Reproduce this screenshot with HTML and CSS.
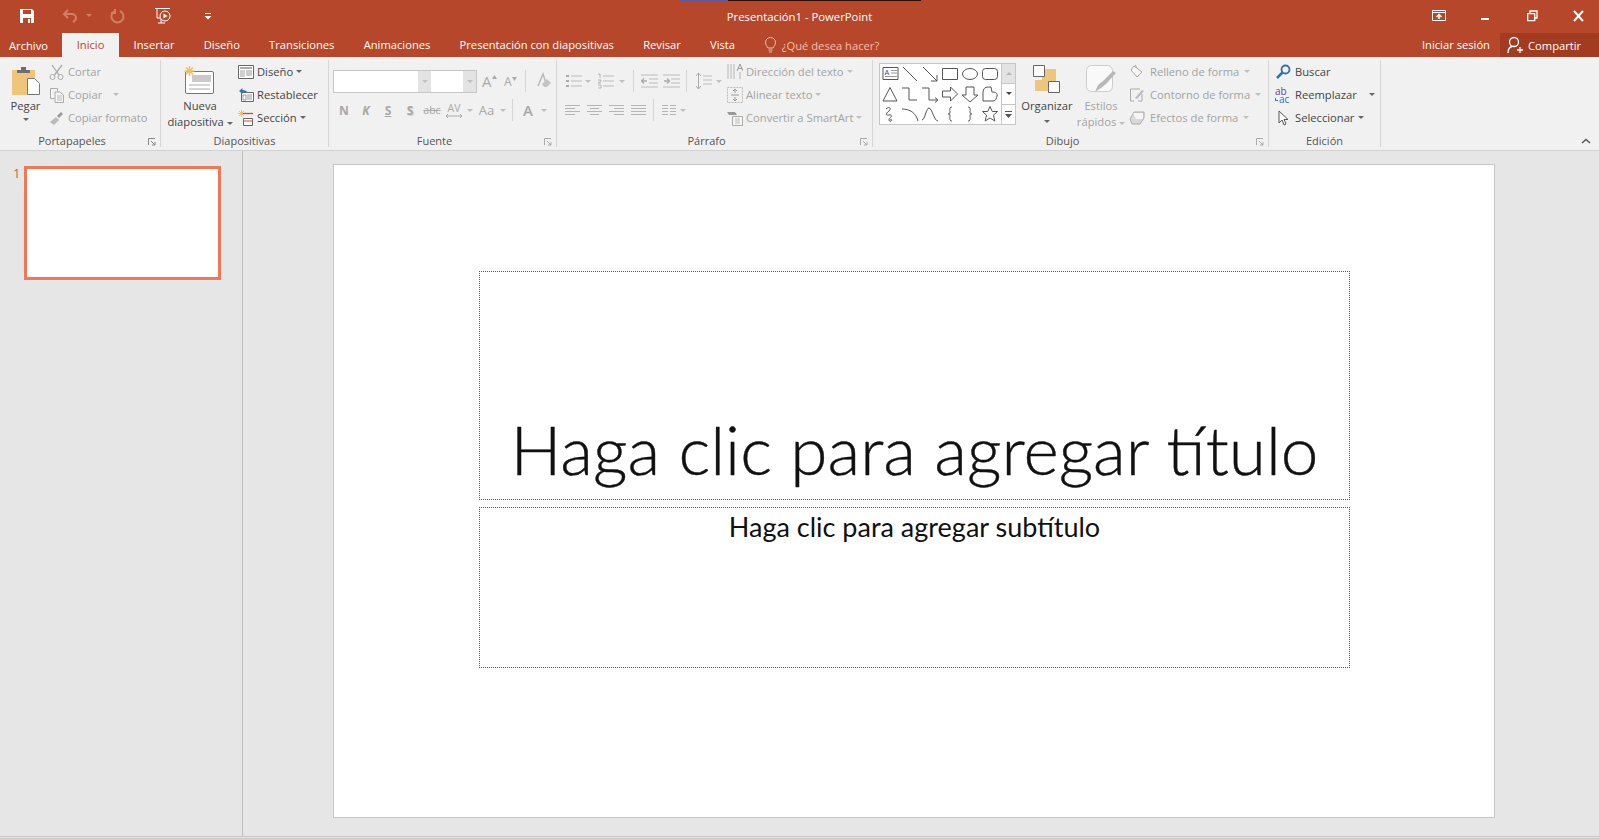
FILE: index.html
```html
<!DOCTYPE html>
<html>
<head>
  <title>Presentación1 - PowerPoint</title>
  <link rel="stylesheet" href="styles.css">
</head>
<body>
  <div class="glitch"><span class="glitch-a"></span><span class="glitch-b"></span></div>

  <!-- title bar -->
  <div class="titlebar">
    <div class="qat">
      <svg class="q-save" width="16" height="16" viewBox="0 0 16 16"><path d="M1 1h12l2 2v12H1z" fill="#fff"/><path d="M4 2h8v4H4zM4 10h8v5H4z" fill="#b7472a"/><path d="M9 11h2v4H9z" fill="#fff"/></svg>
      <svg class="q-undo" width="17" height="16" viewBox="0 0 17 16"><path d="M6 2L2 6l4 4M2 6h8a4 4 0 0 1 4 4c0 2-1 3-3 4" fill="none" stroke="#d17f63" stroke-width="2"/></svg>
      <span class="caret q-caret faded"></span>
      <svg class="q-redo" width="15" height="16" viewBox="0 0 15 16"><path d="M10 3a6 6 0 1 1-5 0M5 1v4H1" fill="none" stroke="#d17f63" stroke-width="2"/></svg>
      <svg class="q-show" width="18" height="18" viewBox="0 0 18 18"><path d="M1 1.500h15M3 2v9h3M4 16h7M7 12v4" fill="none" stroke="#fff"/><circle cx="11" cy="9" r="5" fill="none" stroke="#fff"/><path d="M9.500 6.500l4 2.500-4 2.500z" fill="#fff"/></svg>
      <svg class="q-more" width="8" height="8" viewBox="0 0 8 8"><path d="M1 1h6v1H1zM0.500 4h7L4 7.500z" fill="#fff"/></svg>
    </div>
    <div class="doc-title">Presentación1 - PowerPoint</div>
    <div class="winctl">
      <svg width="15" height="12" viewBox="0 0 15 12"><path d="M.5.500h13v10H.5zM1 2.500h12" fill="none" stroke="#fff"/><path d="M7 9V5M4.500 7L7 4.500 9.500 7" fill="none" stroke="#fff" stroke-width="1.500"/></svg>
      <svg class="w-min" width="10" height="12" viewBox="0 0 10 12"><path d="M1 9h8" stroke="#fff" stroke-width="2"/></svg>
      <svg class="w-restore" width="11" height="12" viewBox="0 0 11 12"><path d="M.7 3.700h7v7h-7zM3 3.500V1h7v7H8" fill="none" stroke="#fff" stroke-width="1.300"/></svg>
      <svg class="w-close" width="11" height="12" viewBox="0 0 11 12"><path d="M1 1l9 10M10 1L1 11" stroke="#fff" stroke-width="2"/></svg>
    </div>
  </div>

  <!-- tabs -->
  <div class="tabs">
    <a class="tab tab-file">Archivo</a>
    <a class="tab tab-active">Inicio</a>
    <a class="tab">Insertar</a>
    <a class="tab">Diseño</a>
    <a class="tab">Transiciones</a>
    <a class="tab">Animaciones</a>
    <a class="tab">Presentación con diapositivas</a>
    <a class="tab">Revisar</a>
    <a class="tab">Vista</a>
    <div class="tell">
      <svg width="13" height="17" viewBox="0 0 13 17"><path d="M4 11C3 9 1.500 8 1.500 5.500a5 5 0 0 1 10 0C11.500 8 10 9 9 11zM4.500 13h4M5 15h3" fill="none" stroke="#efc0ac"/></svg>
      <span>¿Qué desea hacer?</span>
    </div>
    <a class="signin">Iniciar sesión</a>
    <a class="share">
      <svg width="17" height="18" viewBox="0 0 17 18"><circle cx="7" cy="6" r="4.500" fill="none" stroke="#fff" stroke-width="1.300"/><path d="M1 17c0-4 2-6 4-6.500M10 14h6M13 11v6" fill="none" stroke="#fff" stroke-width="1.300"/></svg>
      Compartir
    </a>
  </div>

  <!-- ribbon -->
  <div class="ribbon">

    <div class="group g-clip">
      <div class="group-body">
        <div class="big b-paste">
          <svg width="28" height="30" viewBox="0 0 28 30"><path d="M0 5h23v25H0z" fill="#efc57c"/><path d="M5 5h13v3H5z" fill="#6e6e6e"/><path d="M9 2h5v3H9z" fill="#6e6e6e"/><path d="M15.500 13.500h7l5 5v11h-12z" fill="#fff" stroke="#777"/></svg>
          <span>Pegar</span>
          <span class="caret"></span>
        </div>
        <div class="col c-clip">
          <div class="row off">
            <svg width="16" height="16" viewBox="0 0 16 16"><circle cx="3.500" cy="13" r="2.500" fill="none" stroke="#aaa"/><circle cx="11.500" cy="13" r="2.500" fill="none" stroke="#aaa"/><path d="M3 1l7 10M13 1L5.500 11" stroke="#aaa" stroke-width="1.300"/></svg>
            Cortar
          </div>
          <div class="row off">
            <svg width="16" height="16" viewBox="0 0 16 16"><path d="M1.500 1.500h7v3M1.500 1.500v10h4M6 5h5l3.500 3v7.500H6z" fill="#f6f6f6" stroke="#aaa"/><path d="M8 9h5M8 11h5M8 13h5" stroke="#bbb"/></svg>
            Copiar <span class="caret gap"></span>
          </div>
          <div class="row off">
            <svg width="16" height="16" viewBox="0 0 16 16"><path d="M1 12l6-5 3 3-5 5z" fill="#bbb"/><path d="M8 6l4-4 2 2-4 4z" fill="#999"/></svg>
            Copiar formato
          </div>
        </div>
      </div>
      <div class="group-label">Portapapeles</div>
      <svg class="launcher" width="8" height="8" viewBox="0 0 8 8"><path d="M.5 7V.5H7M3 3l4 4M7 4v3H4" fill="none" stroke="#888"/></svg>
    </div>

    <div class="group g-slides">
      <div class="group-body">
        <div class="big b-new">
          <svg class="i-new" width="31" height="30" viewBox="0 0 31 30"><rect x="2.500" y="6.500" width="28" height="22" rx="1.500" fill="#fff" stroke="#777"/><path d="M9 10h19v7H9z" fill="#c9c9c9"/><path d="M6 20h21M6 24h21" stroke="#aaa"/><path d="M6.500 1v10M1.500 6h10M3 2.500l7 7M10 2.500l-7 7" stroke="#efc064" stroke-width="1.500"/></svg>
          <span>Nueva</span>
          <span>diapositiva <i class="caret"></i></span>
        </div>
        <div class="col c-slides">
          <div class="row">
            <svg width="16" height="16" viewBox="0 0 16 16"><path d="M.5 1.500h15v13H.5z" fill="#fff" stroke="#666"/><path d="M2 3h12v2H2z" fill="#aaa"/><path d="M2 6h5v7H2z" fill="#cfcfcf"/><path d="M8 7h6M8 9h6M8 11h6" stroke="#999"/></svg>
            Diseño <i class="caret"></i>
          </div>
          <div class="row">
            <svg width="16" height="16" viewBox="0 0 16 16"><path d="M3.500 5.500h12v9h-12z" fill="#fff" stroke="#666"/><path d="M9 8h5M9 10h5M9 12h5M5 8h3v5H5z" fill="none" stroke="#999"/><path d="M1 4l3.500-3v2c3 0 4.500 1 5 3-1.500-1-3-1-5-1v2z" fill="#2f76c0"/></svg>
            Restablecer
          </div>
          <div class="row">
            <svg width="16" height="16" viewBox="0 0 16 16"><path d="M3.500 0v7M0 3.500h7M1 1l5 5M6 1L1 6" stroke="#efc064"/><path d="M5 3.500h10" stroke="#d0492a" stroke-width="1.300"/><path d="M5.500 8.500h9v7h-9z" fill="#fff" stroke="#666"/><path d="M5 11h10" stroke="#d0492a"/></svg>
            Sección <i class="caret"></i>
          </div>
        </div>
      </div>
      <div class="group-label">Diapositivas</div>
    </div>

    <div class="group g-font">
      <div class="group-body body-col">
        <div class="tools t-font1">
          <div class="combo c-name"><span class="combo-field"></span><span class="combo-arrow"><i class="caret light"></i></span></div>
          <div class="combo c-size"><span class="combo-field"></span><span class="combo-arrow"><i class="caret light"></i></span></div>
          <span class="txt-tool big-a">A<svg width="5" height="4" viewBox="0 0 5 4"><path d="M0 4l2.500-4L5 4z" fill="#aaa"/></svg></span>
          <span class="txt-tool small-a">A<svg width="5" height="4" viewBox="0 0 5 4"><path d="M0 0l2.500 4L5 0z" fill="#aaa"/></svg></span>
          <span class="vsep"></span>
          <svg class="clear-ico" width="18" height="18" viewBox="0 0 18 18"><path d="M4 14L9 2l4 12" fill="none" stroke="#bbb" stroke-width="1.500"/><path d="M8 12l5-5 4 4-4 4H10z" fill="#c4c4c4"/></svg>
        </div>
        <div class="tools t-font2">
          <span class="tool strong">N</span>
          <span class="tool strong slant">K</span>
          <span class="tool strong under">S</span>
          <span class="tool strong shadow">S</span>
          <span class="tool strike">abc</span>
          <span class="tool av">AV<svg width="16" height="4" viewBox="0 0 16 4"><path d="M0 2h16M2 0L0 2l2 2M14 0l2 2-2 2" fill="none" stroke="#aaa"/></svg></span>
          <i class="caret narrow"></i>
          <span class="tool wide aa">Aa</span>
          <i class="caret narrow"></i>
          <span class="vsep sep-a"></span>
          <span class="tool color-a">A</span>
          <i class="caret narrow"></i>
        </div>
      </div>
      <div class="group-label">Fuente</div>
      <svg class="launcher" width="8" height="8" viewBox="0 0 8 8"><path d="M.5 7V.5H7M3 3l4 4M7 4v3H4" fill="none" stroke="#aaa"/></svg>
    </div>

    <div class="group g-para">
      <div class="group-body">
        <div class="body-col para-left">
          <div class="tools t-para1">
            <svg width="17" height="16" viewBox="0 0 17 16"><path d="M6 3h11M6 8h11M6 13h11" stroke="#bbb"/><path d="M1 2h3v2H1zM1 7h3v2H1zM1 12h3v2H1z" fill="#aaa"/></svg>
            <i class="caret narrow cb1"></i>
            <svg width="17" height="16" viewBox="0 0 17 16"><path d="M6 3h11M6 8h11M6 13h11" stroke="#bbb"/><path d="M1 1h2v4M1 7h3v1L1 10h3M1 12h3v3H1" fill="none" stroke="#aaa" stroke-width=".8"/></svg>
            <i class="caret narrow cb2"></i>
            <span class="vsep v1"></span>
            <svg width="17" height="16" viewBox="0 0 17 16"><path d="M0 2h17M8 6h9M8 10h9M0 14h17" stroke="#bbb"/><path d="M6 8l-5 0M3 5.500L.5 8 3 10.500" fill="none" stroke="#aaa" stroke-width="1.300"/></svg>
            <svg class="i-ind" width="17" height="16" viewBox="0 0 17 16"><path d="M0 2h17M8 6h9M8 10h9M0 14h17" stroke="#bbb"/><path d="M1 8h5M4 5.500L6.500 8 4 10.500" fill="none" stroke="#aaa" stroke-width="1.300"/></svg>
            <span class="vsep v2"></span>
            <svg class="i-line" width="17" height="18" viewBox="0 0 17 18"><path d="M3.500 1v16M1 4l2.500-3L6 4M1 14l2.500 3L6 14" fill="none" stroke="#aaa"/><path d="M8 4h9M8 8h9M8 12h9" stroke="#bbb"/></svg>
            <i class="caret narrow cb3"></i>
          </div>
          <div class="tools t-para2">
            <svg class="al" width="15" height="12" viewBox="0 0 15 12"><path d="M0 1.500h15M0 4.500h10M0 7.500h15M0 10.500h10" stroke="#b5b5b5"/></svg>
            <svg class="al" width="15" height="12" viewBox="0 0 15 12"><path d="M0 1.500h15M3 4.500h9M0 7.500h15M3 10.500h9" stroke="#b5b5b5"/></svg>
            <svg class="al" width="15" height="12" viewBox="0 0 15 12"><path d="M0 1.500h15M5 4.500h10M0 7.500h15M5 10.500h10" stroke="#b5b5b5"/></svg>
            <svg class="al" width="15" height="12" viewBox="0 0 15 12"><path d="M0 1.500h15M0 4.500h15M0 7.500h15M0 10.500h15" stroke="#b5b5b5"/></svg>
            <span class="vsep v3"></span>
            <svg width="14" height="12" viewBox="0 0 14 12"><path d="M0 1.500h6M8 1.500h6M0 4.500h6M8 4.500h6M0 7.500h6M8 7.500h6M0 10.500h6M8 10.500h6" stroke="#b5b5b5"/></svg>
            <i class="caret narrow cb3"></i>
          </div>
        </div>
        <div class="col c-para">
          <div class="row off">
            <svg width="16" height="18" viewBox="0 0 16 18"><path d="M1 1v15M4 1v15M7 1v15" stroke="#b5b5b5"/><path d="M10 8l3-7 3 7M11 5.500h4" fill="none" stroke="#999"/><path d="M13 9v7" stroke="#b5b5b5"/></svg>
            Dirección del texto <i class="caret light"></i>
          </div>
          <div class="row off">
            <svg width="16" height="16" viewBox="0 0 16 16"><path d="M.5.500h15v15H.5z" fill="none" stroke="#bbb" stroke-dasharray="2 1"/><path d="M8 2v4M6 4l2-2 2 2M8 14v-4M6 12l2 2 2-2M4 8h8" fill="none" stroke="#999"/></svg>
            Alinear texto <i class="caret light"></i>
          </div>
          <div class="row off">
            <svg width="16" height="16" viewBox="0 0 16 16"><path d="M0 2h8l2 3H2z" fill="#999"/><path d="M5.500 6.500h10v9h-10z" fill="#f6f6f6" stroke="#aaa"/><path d="M8 9h5M8 11h5M8 13h5" stroke="#bbb"/></svg>
            Convertir a SmartArt <i class="caret light"></i>
          </div>
        </div>
      </div>
      <div class="group-label">Párrafo</div>
      <svg class="launcher" width="8" height="8" viewBox="0 0 8 8"><path d="M.5 7V.5H7M3 3l4 4M7 4v3H4" fill="none" stroke="#aaa"/></svg>
    </div>

    <div class="group g-draw">
      <div class="group-body">
        <div class="gallery">
          <div class="shapes">
            <svg viewBox="0 0 20 20"><path d="M3 3.500h15v12H3z" fill="#fff" stroke="#555"/><path d="M11 6.500h6M11 9h6M5 12.500h12" stroke="#999"/><text x="4.500" y="10.500" class="s-a">A</text></svg>
            <svg viewBox="0 0 20 20"><path d="M3 3l14 14" class="sh"/></svg>
            <svg viewBox="0 0 20 20"><path d="M3 3l14 14M17 11v6h-6" class="sh"/></svg>
            <svg viewBox="0 0 20 20"><path d="M2.500 4.500h15v11h-15z" class="sh"/></svg>
            <svg viewBox="0 0 20 20"><ellipse cx="10" cy="10" rx="7.500" ry="5.500" class="sh"/></svg>
            <svg viewBox="0 0 20 20"><rect x="2.500" y="4.500" width="15" height="11" rx="3" class="sh"/></svg>
            <svg viewBox="0 0 20 20"><path d="M10 3.500L17 17H3z" class="sh"/></svg>
            <svg viewBox="0 0 20 20"><path d="M2 4h7v12h8" class="sh"/></svg>
            <svg viewBox="0 0 20 20"><path d="M2 4h7v12h8M15 13.500l3 2.500-3 2.500" class="sh"/></svg>
            <svg viewBox="0 0 20 20"><path d="M2.500 7h8V3l7 7-7 7v-4h-8z" class="sh"/></svg>
            <svg viewBox="0 0 20 20"><path d="M6 3h8v8h4l-8 7-8-7h4z" class="sh"/></svg>
            <svg viewBox="0 0 20 20"><path d="M3 17V8c0-3 2-5 5-5h3l1 5c3 0 6 1 5 4-.5 2-1 5-4 5z" class="sh"/></svg>
            <svg viewBox="0 0 20 20"><path d="M6 5c3-3 6-1 3 2-3 2-4 5 0 4 3-1 3 2 1 3-2 1-1 4 1 3 2-1 0-2-1-1" class="sh"/></svg>
            <svg viewBox="0 0 20 20"><path d="M2 5c8 0 14 4 16 12" class="sh"/></svg>
            <svg viewBox="0 0 20 20"><path d="M2 16C5 16 6 4 9 4s5 13 9 13" class="sh"/></svg>
            <svg viewBox="0 0 20 20"><path d="M12 3c-3 0-2 3-2 5s-1 2-2 2c1 0 2 0 2 2s-1 5 2 5" class="sh"/></svg>
            <svg viewBox="0 0 20 20"><path d="M8 3c3 0 2 3 2 5s1 2 2 2c-1 0-2 0-2 2s1 5-2 5" class="sh"/></svg>
            <svg viewBox="0 0 20 20"><path d="M10 2.500l2.300 5h5.200l-4 3.700 1.300 5.800-4.800-3-4.800 3 1.300-5.800-4-3.700h5.200z" class="sh"/></svg>
          </div>
          <div class="gal-scroll">
            <span class="gal-btn gal-up"><i class="caret up light"></i></span>
            <span class="gal-btn"><i class="caret dark"></i></span>
            <span class="gal-btn gal-more"><svg width="7" height="8" viewBox="0 0 7 8"><path d="M0 1h7v1H0zM0 4h7L3.500 8z" fill="#555"/></svg></span>
          </div>
        </div>
        <div class="big b-arrange">
          <svg width="28" height="28" viewBox="0 0 28 28"><path d="M9 4h14v12H9zM2 15h14v11H2z" fill="#efc57c"/><path d="M.5.500h11v11H.5z" fill="#fff" stroke="#666"/><path d="M15.500 16.500h11v11h-11z" fill="#fff" stroke="#666"/></svg>
          <span>Organizar</span>
          <span class="caret"></span>
        </div>
        <div class="big b-styles off">
          <svg width="30" height="28" viewBox="0 0 30 28"><rect x=".5" y=".5" width="26" height="26" rx="5" fill="#f9f9f9" stroke="#ccc"/><path d="M30 8L20 19l-5 4-6 4 3-7 5-4 10-10z" fill="#b8b8b8"/></svg>
          <span>Estilos</span>
          <span>rápidos <i class="caret light"></i></span>
        </div>
        <div class="col c-draw">
          <div class="row off">
            <svg width="16" height="16" viewBox="0 0 16 16"><path d="M5 2l8 6-5 5-6-7z" fill="#f6f6f6" stroke="#aaa"/><path d="M6 1l2 3" stroke="#aaa"/></svg>
            Relleno de forma <i class="caret light"></i>
          </div>
          <div class="row off">
            <svg width="16" height="16" viewBox="0 0 16 16"><path d="M11 2H1.500v12H5M13 7v7H9" fill="none" stroke="#aaa"/><path d="M6 11l7-8 2 1-7 8z" fill="#bbb"/></svg>
            Contorno de forma <i class="caret light"></i>
          </div>
          <div class="row off">
            <svg width="16" height="16" viewBox="0 0 16 16"><path d="M1 9l4-7h10v6l-4 6H3z" fill="#d9d9d9" stroke="#aaa"/><path d="M4 3h10v6H7z" fill="#f6f6f6"/></svg>
            Efectos de forma <i class="caret light"></i>
          </div>
        </div>
      </div>
      <div class="group-label">Dibujo</div>
      <svg class="launcher" width="8" height="8" viewBox="0 0 8 8"><path d="M.5 7V.5H7M3 3l4 4M7 4v3H4" fill="none" stroke="#aaa"/></svg>
    </div>

    <div class="group g-edit">
      <div class="group-body">
        <div class="col c-edit">
          <div class="row">
            <svg width="16" height="16" viewBox="0 0 16 16"><circle cx="10.500" cy="5.500" r="4" fill="none" stroke="#2f6fb5" stroke-width="1.800"/><path d="M7.500 8.500L2 14" stroke="#2f6fb5" stroke-width="2.500"/></svg>
            Buscar
          </div>
          <div class="row">
            <svg width="16" height="16" viewBox="0 0 16 16"><text x="0" y="8" class="rp-a">ab</text><text x="4" y="15.500" class="rp-b">ac</text><path d="M.5 11v2.500H3" fill="none" stroke="#2f6fb5"/></svg>
            Reemplazar <i class="caret gap"></i>
          </div>
          <div class="row">
            <svg width="16" height="16" viewBox="0 0 16 16"><path d="M4 1v12l3-3 2 5 2-1-2-4.500h4z" fill="#fff" stroke="#555"/></svg>
            Seleccionar <i class="caret"></i>
          </div>
        </div>
      </div>
      <div class="group-label">Edición</div>
    </div>

    <svg class="collapse" width="10" height="6" viewBox="0 0 10 6"><path d="M1 5l4-3.500L9 5" fill="none" stroke="#555" stroke-width="1.500"/></svg>
  </div>

  <!-- workspace -->
  <div class="workspace">
    <div class="thumbs">
      <span class="thumb-num">1</span>
      <div class="thumb"></div>
    </div>
    <div class="editor">
      <div class="slide">
        <div class="ph ph-title">Haga clic para agregar título</div>
        <div class="ph ph-sub">Haga clic para agregar subtítulo</div>
      </div>
    </div>
  </div>
  <div class="bottom-line"></div>
</body>
</html>
```

FILE: styles.css
```css
* {
  box-sizing: border-box;
}

html, body {
  margin: 0;
  height: 100%;
  overflow: hidden;
}

body {
  background-color: #e6e6e6;
  font-family: "Open Sans", "Liberation Sans", sans-serif;
  font-size: 11.2px;
  color: #444;
  position: relative;
}

svg {
  display: block;
  flex: none;
}

i {
  font-style: normal;
}

/* stray strip at the very top */
.glitch {
  position: absolute;
  top: 0;
  left: 680px;
  display: flex;
  height: 1px;
}

.glitch-a {
  width: 48px;
  background-color: #5a5aa8;
}

.glitch-b {
  width: 193px;
  background-color: #2a0c06;
}

/* title bar */
.titlebar {
  height: 33px;
  background-color: #b7472a;
  display: grid;
  grid-template-columns: 1fr auto 1fr;
  align-items: center;
  color: #fff;
}

.qat {
  display: flex;
  align-items: center;
  padding: 0 0 2px 19px;
}

.q-undo {
  margin-left: 27px;
}

.q-caret {
  margin-left: 7px;
}

.q-redo {
  margin-left: 18px;
}

.q-show {
  margin-left: 29px;
}

.q-more {
  margin-left: 32px;
}

.doc-title {
  font-size: 11.3px;
}

.winctl {
  display: flex;
  justify-content: flex-end;
  align-items: center;
  padding: 0 15px 2px 0;
}

.w-min {
  margin-left: 33px;
}

.w-restore {
  margin-left: 37px;
}

.w-close {
  margin-left: 35px;
}

/* tabs */
.tabs {
  height: 24px;
  background-color: #b7472a;
  display: flex;
  align-items: stretch;
  color: #fff;
}

.tab {
  padding: 3px 14.6px 0;
  white-space: nowrap;
  line-height: 18px;
}

.tab-file {
  padding: 4px 14px 0 9px;
}

.tab-active {
  background-color: #f1f1f1;
  color: #b7472a;
  width: 57px;
  text-align: center;
  padding: 3px 0 0;
}

.tell {
  display: flex;
  align-items: center;
  gap: 5px;
  margin-left: 14px;
  color: #efc0ac;
}

.signin {
  margin-left: auto;
  line-height: 18px;
  padding-top: 3px;
}

.share {
  width: 99px;
  margin-left: 10px;
  background-color: #a33b21;
  display: flex;
  align-items: center;
  gap: 4px;
  padding-left: 7px;
}

/* ribbon */
.ribbon {
  height: 94px;
  background-color: #f1f1f1;
  border-bottom: 1px solid #d2d2d2;
  display: flex;
  padding-top: 3px;
  position: relative;
}

.group {
  position: relative;
  height: 87px;
  border-right: 1px solid #d6d6d6;
  flex: none;
}

.group-body {
  height: 72px;
  display: flex;
}

.body-col {
  flex-direction: column;
}

.group-label {
  height: 15px;
  line-height: 17px;
  text-align: center;
  color: #555;
  font-size: 11px;
}

.g-clip .group-label,
.g-font .group-label,
.g-para .group-label,
.g-draw .group-label {
  padding-right: 16px;
}

.launcher {
  position: absolute;
  right: 4px;
  bottom: 1px;
}

.g-clip {
  width: 161px;
}

.g-slides {
  width: 168px;
}

.g-font {
  width: 228px;
}

.g-para {
  width: 316px;
}

.g-draw {
  width: 396px;
}

.g-edit {
  width: 112px;
}

.col {
  display: flex;
  flex-direction: column;
}

.row {
  height: 23px;
  display: flex;
  align-items: center;
  gap: 3px;
  white-space: nowrap;
}

.off {
  color: #a3a3a3;
}

.big {
  display: flex;
  flex-direction: column;
  align-items: center;
  padding-top: 5px;
  line-height: 16px;
  white-space: nowrap;
}

.big svg {
  margin-bottom: 3px;
}

.b-paste {
  width: 49px;
  padding-left: 2px;
}

.b-paste .caret {
  margin-top: 4px;
}

.b-new {
  width: 72px;
  margin-left: 3px;
}

.i-new {
  margin-right: 3px;
}

.c-slides {
  margin-left: 2px;
}

/* caret */
.caret {
  display: inline-block;
  width: 0;
  height: 0;
  border-left: 3px solid transparent;
  border-right: 3px solid transparent;
  border-top: 3px solid #666;
  vertical-align: middle;
  flex: none;
}

.caret.light {
  border-top-color: #c0c0c0;
}

.caret.dark {
  border-top-color: #444;
}

.caret.faded {
  border-top-color: #d17f63;
}

.caret.up {
  border-top: 0;
  border-bottom: 3px solid #b5b5b5;
}

.caret.gap {
  margin-left: 8px;
  border-top-color: #bbb;
}

.c-edit .caret.gap {
  border-top-color: #666;
}

.caret.narrow {
  border-top-color: #c0c0c0;
  margin: 0 2px;
}

/* font group */
.tools {
  display: flex;
  align-items: center;
}

.t-font1 {
  height: 24px;
  margin: 9px 0 0 4px;
}

.t-font2 {
  height: 24px;
  margin: 5px 0 0 4px;
}

.combo {
  height: 23px;
  display: flex;
  background-color: #fff;
  border: 1px solid #c6c6c6;
}

.c-name {
  width: 98px;
  border-right: 0;
}

.c-size {
  width: 46px;
  border-left: 0;
}

.combo-field {
  flex: 1;
}

.combo-arrow {
  width: 13px;
  background-color: #e3e3e3;
  display: flex;
  align-items: center;
  justify-content: center;
}

.txt-tool {
  display: flex;
  align-items: flex-start;
  color: #aaa;
}

.big-a {
  font-size: 15px;
  margin-left: 5px;
  width: 22px;
}

.small-a {
  font-size: 12px;
  margin-left: 0;
  width: 21px;
}

.txt-tool svg {
  margin-top: 4px;
}

.vsep {
  width: 1px;
  height: 22px;
  background-color: #d6d6d6;
  flex: none;
}

.clear-ico {
  margin-left: 8px;
}

.tool {
  width: 22px;
  text-align: center;
  color: #a8a8a8;
  flex: none;
}

.tool.wide {
  width: 23px;
}

.strong {
  font-weight: 700;
  font-size: 12px;
}

.slant {
  font-style: italic;
}

.under {
  text-decoration: underline;
}

.shadow {
  text-shadow: 1px 1px 1px #ccc;
}

.strike {
  text-decoration: line-through;
  font-size: 10.5px;
}

.av {
  display: flex;
  flex-direction: column;
  align-items: center;
  font-size: 10.5px;
  line-height: 11px;
}

.aa {
  font-size: 13px;
}

.sep-a {
  margin: 0 4px;
}

.color-a {
  font-size: 15px;
  font-weight: 600;
}

/* paragraph group */
.para-left {
  display: flex;
  flex-direction: column;
  width: 160px;
  margin-left: 8px;
}

.t-para1 {
  height: 24px;
  margin-top: 9px;
}

.t-para2 {
  height: 24px;
  margin-top: 5px;
}

.caret.cb1 {
  margin: 0 6px 0 3px;
}

.caret.cb2 {
  margin: 0 8px 0 5px;
}

.caret.cb3 {
  margin: 0 0 0 4px;
}

.v1 {
  margin: 0 7px 0 0;
}

.i-ind {
  margin-left: 5px;
}

.v2 {
  margin: 0 8px 0 6px;
}

.al {
  margin-right: 7px;
}

.v3 {
  margin: 0 8px 0 0;
}

.c-para {
  margin-left: 2px;
}

/* drawing group */
.g-draw .group-body {
  padding-left: 6px;
}

.gallery {
  width: 137px;
  height: 62px;
  margin-top: 3px;
  background-color: #fff;
  border: 1px solid #c6c6c6;
  display: flex;
}

.shapes {
  width: 121px;
  display: grid;
  grid-template-columns: repeat(6, 20px);
  grid-template-rows: repeat(3, 20px);
}

.shapes svg {
  width: 20px;
  height: 20px;
}

.sh {
  fill: none;
  stroke: #555;
  stroke-width: 1;
}

.s-a {
  font-size: 7px;
  fill: #3d3db0;
  font-family: "Liberation Sans", sans-serif;
}

.gal-scroll {
  flex: 1;
  display: flex;
  flex-direction: column;
  border-left: 1px solid #c6c6c6;
}

.gal-btn {
  flex: 1;
  display: flex;
  align-items: center;
  justify-content: center;
  border-bottom: 1px solid #c6c6c6;
}

.gal-up {
  background-color: #e3e3e3;
}

.gal-more {
  border-bottom: 0;
}

.b-arrange {
  width: 60px;
  margin-left: 1px;
}

.b-arrange svg {
  margin-bottom: 5px;
}

.b-arrange .caret {
  margin-top: 6px;
}

.b-styles {
  width: 42px;
  margin-left: 3px;
}

.b-styles svg {
  margin-bottom: 5px;
}

.c-draw {
  margin-left: 7px;
}

.c-draw .row {
  gap: 5px;
}

/* editing group */
.c-edit {
  padding-left: 6px;
}

.c-edit .row {
  gap: 4px;
}

.c-edit svg {
  overflow: visible;
}

.rp-a {
  font-size: 10px;
  fill: #6a3ea1;
  font-family: "Open Sans", sans-serif;
}

.rp-b {
  font-size: 10px;
  fill: #2f6fb5;
  font-family: "Open Sans", sans-serif;
}

.collapse {
  position: absolute;
  right: 8px;
  bottom: 6px;
}

/* workspace */
.workspace {
  height: 685px;
  display: flex;
  background-color: #e6e6e6;
}

.thumbs {
  width: 243px;
  flex: none;
  border-right: 1px solid #bdbdbd;
  display: flex;
  padding: 15px 0 0 13px;
  gap: 6px;
}

.thumb-num {
  color: #cf5f48;
  font-size: 13px;
  line-height: 14px;
  width: 5px;
}

.thumb {
  width: 197px;
  height: 114px;
  background-color: #fff;
  border: 3px solid #f47656;
}

.editor {
  flex: 1;
  padding: 13px 0 0 90px;
}

.slide {
  width: 1162px;
  height: 654px;
  background-color: #fff;
  border: 1px solid #c6c6c6;
  padding: 106px 0 0 145px;
}

.ph {
  width: 871px;
  border: 1px dotted #555;
  text-align: center;
  color: #111;
  font-family: Lato, "Liberation Sans", sans-serif;
}

.ph-title {
  height: 229px;
  margin-bottom: 7px;
  font-weight: 300;
  font-size: 67.5px;
  line-height: 84px;
  -webkit-text-stroke: 0.4px #111;
  display: flex;
  align-items: flex-end;
  justify-content: center;
  padding-bottom: 8px;
}

.ph-sub {
  height: 161px;
  font-size: 27px;
  line-height: 34px;
  padding-top: 2px;
}

.bottom-line {
  height: 3px;
  border-top: 1px solid #c6c6c6;
  border-bottom: 1px solid #c6c6c6;
}
```
